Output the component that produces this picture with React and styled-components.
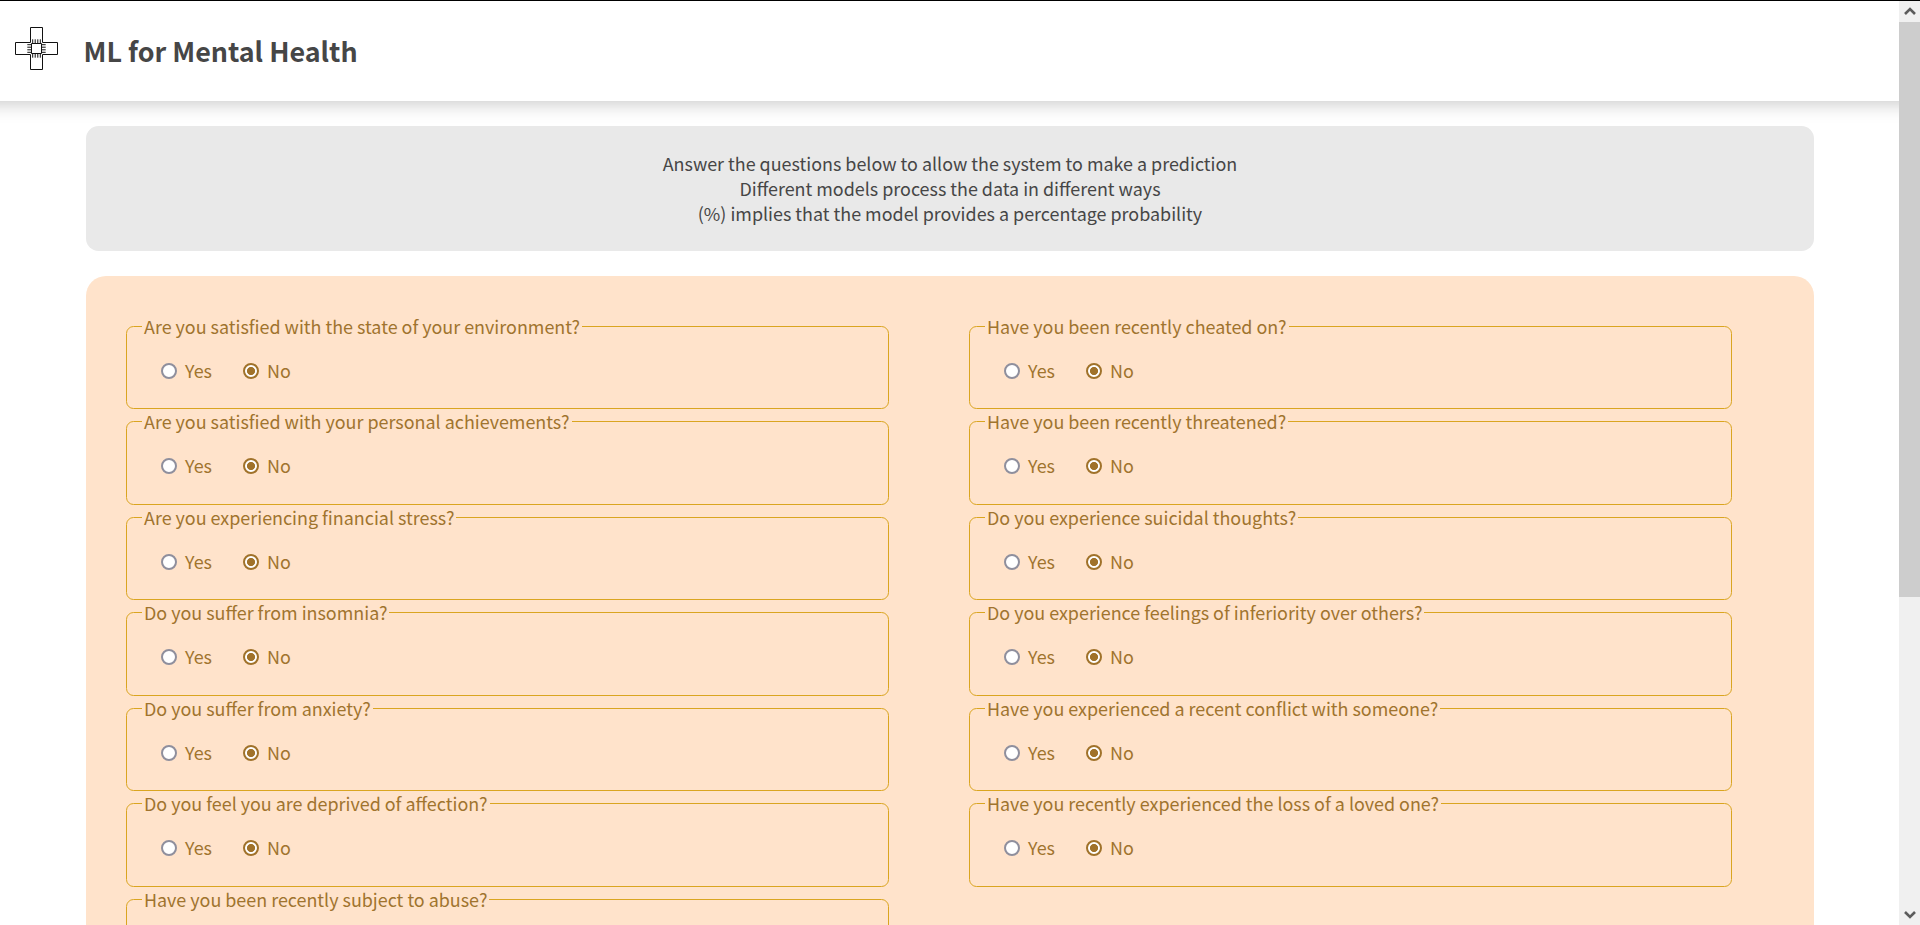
import React, { useState } from "react";
import styled, { createGlobalStyle } from "styled-components";

const GlobalStyle = createGlobalStyle`
  *, *::before, *::after { box-sizing: border-box; }
  body {
    margin: 0;
    overflow: hidden;
    background: #fff;
    color: #464646;
    font-family: "Source Sans Pro", "Noto Sans CJK SC", sans-serif;
    font-size: 17.92px;
    line-height: 25px;
  }
`;

const Window = styled.div`
  display: flex;
  height: 925px;
  border-top: 1px solid #000;
  overflow: hidden;
`;

const Page = styled.div`
  flex: 1;
  min-width: 0;
  overflow: hidden;
`;

const Header = styled.header`
  display: flex;
  align-items: center;
  gap: 24.5px;
  height: 100px;
  margin: 0 -30px;
  padding-left: 44px;
  background: #fff;
  box-shadow: 0 2px 18px rgba(0, 0, 0, 0.23);
`;

const Logo = styled.svg`
  width: 45px;
  height: 45px;
  margin-bottom: 5px;
`;

const Title = styled.h1`
  margin: 0;
  font-size: 26.87px;
  line-height: 40px;
  font-weight: 700;
`;

const Main = styled.main`
  display: flex;
  flex-direction: column;
  gap: 25px;
  padding: 25px 85px 0 86px;
`;

const Intro = styled.section`
  padding: 25px;
  border-radius: 12.5px;
  background: #e9e9e9;
  text-align: center;
`;

const IntroLine = styled.p`
  margin: 0;
`;

const Form = styled.form`
  display: flex;
  gap: 80px;
  padding: 37.5px 82px 40px 40px;
  border-radius: 20px;
  background: #ffe3cb;
  color: #a0742e;
`;

const Column = styled.div`
  flex: 1;
  min-width: 0;
`;

const Question = styled.fieldset`
  height: 95.5px;
  margin: 0;
  padding: 0 15px 0;
  border: 1px solid #daa520;
  border-radius: 7.5px;
`;

const Legend = styled.legend`
  height: 25px;
  padding: 0 2px;
  white-space: nowrap;
`;

const Options = styled.div`
  display: flex;
  gap: 31px;
  padding: 19px 0 0 19px;
`;

const Option = styled.label`
  display: flex;
  align-items: center;
  gap: 8px;
`;

const Radio = styled.input`
  appearance: none;
  width: 16px;
  height: 16px;
  margin: 1px 0 0;
  border: 2px solid #8f8f9d;
  border-radius: 50%;
  background: #fff;

  &:checked {
    border-color: #a0722a;
    background: radial-gradient(circle, #a0722a 3.7px, #fff 4.4px);
  }
`;

const Scrollbar = styled.aside`
  display: flex;
  flex-direction: column;
  width: 21px;
  background: #f0f0f0;
`;

const ScrollButton = styled.div`
  display: flex;
  align-items: center;
  justify-content: center;
  height: 21px;
`;

const Track = styled.div`
  flex: 1;
`;

const Thumb = styled.div`
  height: 575px;
  background: #cdcdcd;
`;

const LEFT = [
  "Are you satisfied with the state of your environment?",
  "Are you satisfied with your personal achievements?",
  "Are you experiencing financial stress?",
  "Do you suffer from insomnia?",
  "Do you suffer from anxiety?",
  "Do you feel you are deprived of affection?",
  "Have you been recently subject to abuse?",
];

const RIGHT = [
  "Have you been recently cheated on?",
  "Have you been recently threatened?",
  "Do you experience suicidal thoughts?",
  "Do you experience feelings of inferiority over others?",
  "Have you experienced a recent conflict with someone?",
  "Have you recently experienced the loss of a loved one?",
];

function YesNo({ text }) {
  const [answer, setAnswer] = useState("No");
  return (
    <Question>
      <Legend>{text}</Legend>
      <Options>
        {["Yes", "No"].map((value) => (
          <Option key={value}>
            <Radio
              type="radio"
              name={text}
              checked={answer === value}
              onChange={() => setAnswer(value)}
            />
            {value}
          </Option>
        ))}
      </Options>
    </Question>
  );
}

function ChipCross() {
  return (
    <Logo viewBox="0 0 45 45" fill="none" stroke="#111">
      <path d="M16.5 1.5h12v15h15v12h-15v15h-12v-15h-15v-12h15z" />
      <path d="M17.5 17.5h10v10h-10z" />
      <path
        d="M18.7 13.3v4M21.2 13.3v4M23.8 13.3v4M26.3 13.3v4M18.7 28v3.7M21.2 28v3.7M23.8 28v3.7M26.3 28v3.7M13.3 18.7h4M13.3 21.2h4M13.3 23.8h4M13.3 26.3h4M28 18.7h3.7M28 21.2h3.7M28 23.8h3.7M28 26.3h3.7"
      />
    </Logo>
  );
}

function Arrow({ d }) {
  return (
    <svg width="12" height="10" viewBox="0 0 12 10" fill="none" stroke="#5c5c5c" strokeWidth="2.6">
      <path d={d} />
    </svg>
  );
}

export default function App() {
  return (
    <>
      <GlobalStyle />
      <Window>
        <Page>
          <Header>
            <ChipCross />
            <Title>ML for Mental Health</Title>
          </Header>
          <Main>
            <Intro>
              <IntroLine>Answer the questions below to allow the system to make a prediction</IntroLine>
              <IntroLine>Different models process the data in different ways</IntroLine>
              <IntroLine>(%) implies that the model provides a percentage probability</IntroLine>
            </Intro>
            <Form>
              <Column>{LEFT.map((q) => <YesNo key={q} text={q} />)}</Column>
              <Column>{RIGHT.map((q) => <YesNo key={q} text={q} />)}</Column>
            </Form>
          </Main>
        </Page>
        <Scrollbar>
          <ScrollButton><Arrow d="M1 7l5-5 5 5" /></ScrollButton>
          <Track><Thumb /></Track>
          <ScrollButton><Arrow d="M1 2l5 5 5-5" /></ScrollButton>
        </Scrollbar>
      </Window>
    </>
  );
}
